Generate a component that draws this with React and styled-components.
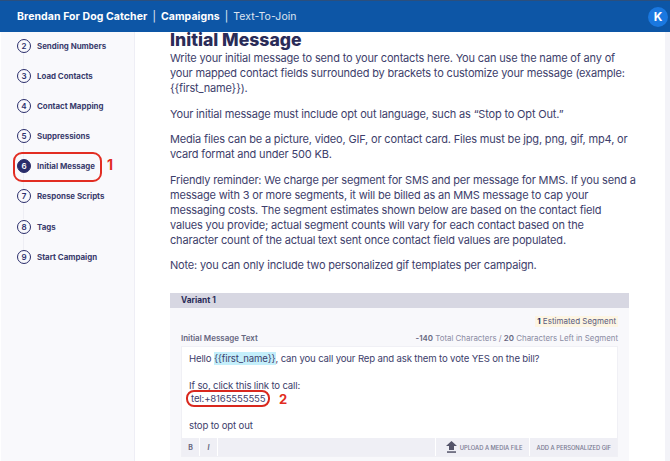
import React from "react";
import styled, { createGlobalStyle } from "styled-components";

const steps = [
  { num: 2, label: "Sending Numbers" },
  { num: 3, label: "Load Contacts" },
  { num: 4, label: "Contact Mapping" },
  { num: 5, label: "Suppressions" },
  { num: 6, label: "Initial Message", active: true },
  { num: 7, label: "Response Scripts" },
  { num: 8, label: "Tags" },
  { num: 9, label: "Start Campaign" },
];

export default function App() {
  return (
    <Page>
      <GlobalStyle />
      <Header>
        <Crumbs>
          <Strong>Brendan For Dog Catcher</Strong>
          <Sep>|</Sep>
          <Strong>Campaigns</Strong>
          <Sep>|</Sep>
          <Light>Text-To-Join</Light>
        </Crumbs>
        <Avatar>K</Avatar>
      </Header>
      <Body>
        <Sidebar>
          {steps.map((step, i) => (
            <Step key={step.num}>
              <Circle active={step.active} last={i === steps.length - 1}>
                {step.num}
              </Circle>
              <StepLabel>{step.label}</StepLabel>
              {step.active && (
                <>
                  <StepRing />
                  <StepMark>1</StepMark>
                </>
              )}
            </Step>
          ))}
        </Sidebar>
        <Main>
          <Title>Initial Message</Title>
          <Para>
            Write your initial message to send to your contacts here. You can use the name of any of
            <br />
            your mapped contact fields surrounded by brackets to customize your message (example:
            <br />
            {"{{first_name}})."}
          </Para>
          <Para>Your initial message must include opt out language, such as “Stop to Opt Out.”</Para>
          <Para>
            Media files can be a picture, video, GIF, or contact card. Files must be jpg, png, gif, mp4, or
            <br />
            vcard format and under 500 KB.
          </Para>
          <Para>
            Friendly reminder: We charge per segment for SMS and per message for MMS. If you send a
            <br />
            message with 3 or more segments, it will be billed as an MMS message to cap your
            <br />
            messaging costs. The segment estimates shown below are based on the contact field
            <br />
            values you provide; actual segment counts will vary for each contact based on the
            <br />
            character count of the actual text sent once contact field values are populated.
          </Para>
          <Para>Note: you can only include two personalized gif templates per campaign.</Para>
          <Variant>
            <VariantBar>Variant 1</VariantBar>
            <VariantBody>
              <SegmentRow>
                <SegmentBadge>
                  <b>1</b> Estimated Segment
                </SegmentBadge>
              </SegmentRow>
              <CountRow>
                <FieldLabel>Initial Message Text</FieldLabel>
                <Counts>
                  <b>-140</b> Total Characters / <b>20</b> Characters Left in Segment
                </Counts>
              </CountRow>
              <Editor>
                <EditorText>
                  <MsgLine>
                    Hello <Token>{"{{first_name}}"}</Token>, can you call your Rep and ask them to vote YES on the bill?
                  </MsgLine>
                  <MsgLine>&nbsp;</MsgLine>
                  <MsgLine>If so, click this link to call:</MsgLine>
                  <TelLine>
                    tel:+8165555555
                    <TelRing />
                    <TelMark>2</TelMark>
                  </TelLine>
                  <MsgLine>&nbsp;</MsgLine>
                  <MsgLine>stop to opt out</MsgLine>
                </EditorText>
                <Toolbar>
                  <ToolBtn>B</ToolBtn>
                  <ToolBtn italic>I</ToolBtn>
                  <ToolSpacer />
                  <ActionBtn upload>
                    <svg width="11" height="12" viewBox="0 0 11 12">
                      <path d="M5.5 0 L11 5 H8 V9 H3 V5 H0 Z" fill="#55556a" />
                      <rect x="1" y="10.3" width="9" height="1.5" fill="#55556a" />
                    </svg>
                    UPLOAD A MEDIA FILE
                  </ActionBtn>
                  <ActionBtn>ADD A PERSONALIZED GIF</ActionBtn>
                </Toolbar>
              </Editor>
            </VariantBody>
          </Variant>
        </Main>
        <RightStrip />
      </Body>
    </Page>
  );
}

const GlobalStyle = createGlobalStyle`
  html, body {
    margin: 0;
    padding: 0;
    height: 100%;
    overflow: hidden;
    background: #ffffff;
  }
`;

const Page = styled.div`
  width: 670px;
  height: 461px;
  overflow: hidden;
  display: flex;
  flex-direction: column;
  font-family: Inter, "Open Sans", sans-serif;
  color: #33345f;
`;

const Header = styled.header`
  flex: 0 0 32px;
  box-sizing: border-box;
  display: flex;
  align-items: center;
  justify-content: space-between;
  padding: 0 2px 0 17px;
  background: #0d56a6;
  border-top: 1px solid #2b4f7d;
  color: #ffffff;
`;

const Crumbs = styled.div`
  display: flex;
  align-items: center;
  gap: 5px;
  font-size: 10.5px;
`;

const Strong = styled.span`
  font-weight: 700;
  letter-spacing: 0.08px;
`;

const Sep = styled.span`
  font-weight: 400;
  opacity: 0.9;
`;

const Light = styled.span`
  font-weight: 400;
  opacity: 0.85;
  letter-spacing: 0.05px;
`;

const Avatar = styled.div`
  width: 20px;
  height: 20px;
  border-radius: 50%;
  background: #1a78e0;
  display: flex;
  align-items: center;
  justify-content: center;
  font-size: 12px;
  font-weight: 700;
`;

const Body = styled.div`
  flex: 1;
  display: flex;
  min-height: 0;
`;

const Sidebar = styled.nav`
  flex: 0 0 134px;
  box-sizing: border-box;
  padding-top: 1px;
  margin-left: 1px;
  background: #f9f9fc;
  border-right: 1px solid #eeeef5;
  display: flex;
  flex-direction: column;
`;

const Step = styled.div`
  position: relative;
  height: 30.1px;
  padding: 6px 0 0 16px;
  box-sizing: border-box;
  display: flex;
  align-items: flex-start;
  gap: 6px;
`;

const Circle = styled.div`
  position: relative;
  width: 14px;
  height: 14px;
  box-sizing: border-box;
  border-radius: 50%;
  border: 1.3px solid #2a2d6b;
  background: ${({ active }) => (active ? "#2a2d6b" : "#f9f9fc")};
  color: ${({ active }) => (active ? "#ffffff" : "#2a2d6b")};
  display: flex;
  align-items: center;
  justify-content: center;
  font-size: 8px;
  font-weight: 600;
  &::after {
    content: "";
    display: ${({ last }) => (last ? "none" : "block")};
    position: absolute;
    left: 5px;
    top: 13px;
    width: 1px;
    height: 16px;
    background: #eeeef4;
  }
`;

const StepLabel = styled.span`
  font-size: 7.9px;
  line-height: 14px;
  font-weight: 700;
  color: #3a3c6c;
`;

const StepRing = styled.div`
  position: absolute;
  left: 12px;
  top: -1px;
  width: 89px;
  height: 30px;
  box-sizing: border-box;
  border: 2px solid #e22d22;
  border-radius: 9px;
`;

const StepMark = styled.span`
  position: absolute;
  left: 106px;
  top: 3px;
  font-size: 14px;
  font-weight: 700;
  color: #e22d22;
`;

const Main = styled.main`
  flex: 1;
  min-width: 0;
  padding: 0 0 0 35px;
  background: #ffffff;
`;

const Title = styled.h1`
  margin: -1px 0 0;
  font-size: 17.6px;
  line-height: 18px;
  font-weight: 800;
  color: #2a2c58;
`;

const Para = styled.p`
  margin: 2px 0 11px;
  font-size: 11px;
  line-height: 15.1px;
  letter-spacing: -0.17px;
  white-space: nowrap;
  color: #3d3e6b;
  & + & {
    margin: 0 0 10px;
  }
`;

const Variant = styled.section`
  margin-top: 20px;
  width: 459px;
`;

const VariantBar = styled.div`
  height: 15px;
  padding-left: 11px;
  background: #d7d7e2;
  font-size: 8.3px;
  line-height: 15px;
  font-weight: 700;
  color: #2a2c58;
`;

const VariantBody = styled.div`
  padding: 8px 11px 5px;
  background: #f8f8fb;
  height: 160px;
  box-sizing: border-box;
`;

const SegmentRow = styled.div`
  display: flex;
  justify-content: flex-end;
`;

const SegmentBadge = styled.span`
  padding: 0 2px;
  background: #fdf5e3;
  font-size: 8px;
  line-height: 11px;
  color: #5a5b7e;
  b {
    color: #2a2c58;
    font-weight: 700;
  }
`;

const CountRow = styled.div`
  display: flex;
  justify-content: space-between;
  align-items: center;
  margin-top: 5px;
  height: 12px;
`;

const FieldLabel = styled.span`
  font-size: 8px;
  font-weight: 600;
  color: #66677f;
`;

const Counts = styled.span`
  font-size: 7.9px;
  color: #8a8ba3;
  b {
    font-weight: 600;
    color: #66677f;
  }
`;

const Editor = styled.div`
  margin-top: 2px;
  background: #ffffff;
  border: 1px solid #f0f0f5;
`;

const EditorText = styled.div`
  height: 86px;
  padding: 5px 7px 0;
  font-size: 9.6px;
  line-height: 13.3px;
  letter-spacing: -0.15px;
  color: #3d3e6b;
`;

const MsgLine = styled.div`
  white-space: nowrap;
`;

const Token = styled.span`
  background: #c4effb;
  padding: 1px 0;
`;

const TelLine = styled.div`
  position: relative;
  white-space: nowrap;
  padding-left: 2px;
`;

const TelRing = styled.div`
  position: absolute;
  left: -3px;
  top: -2px;
  width: 84px;
  height: 17px;
  box-sizing: border-box;
  border: 2px solid #d9281e;
  border-radius: 8px;
`;

const TelMark = styled.span`
  position: absolute;
  left: 90px;
  top: -1px;
  font-size: 13px;
  line-height: 16px;
  font-weight: 700;
  color: #e22d22;
`;

const Toolbar = styled.div`
  height: 18px;
  display: flex;
  gap: 1px;
  background: #ffffff;
`;

const ToolBtn = styled.div`
  width: 17px;
  background: #efeff5;
  display: flex;
  align-items: center;
  justify-content: center;
  font-size: 7px;
  font-weight: 700;
  font-style: ${({ italic }) => (italic ? "italic" : "normal")};
  color: #66677f;
`;

const ToolSpacer = styled.div`
  flex: 1;
  background: #efeff5;
`;

const ActionBtn = styled.div`
  padding: ${({ upload }) => (upload ? "0 6px 0 10px" : "0 6px 0 7px")};
  background: #efeff5;
  display: flex;
  align-items: center;
  gap: 3px;
  font-size: 5.8px;
  font-weight: 500;
  color: #777890;
`;

const RightStrip = styled.div`
  flex: 0 0 5px;
  background: #f3f3f8;
`;
